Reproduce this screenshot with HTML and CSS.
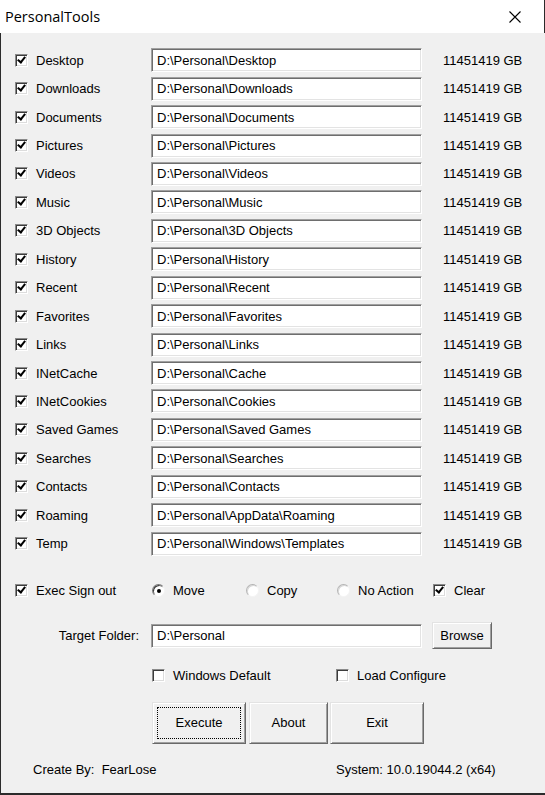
FILE: index.html
```
<!DOCTYPE html>
<html>
<head>
<meta charset="utf-8">
<link rel="stylesheet" href="styles.css">
</head>
<body>
<div class="window">
  <div class="titlebar">
    <span class="title">PersonalTools</span>
    <svg class="close" width="12" height="12" viewBox="0 0 12 12"><path d="M0.5 0.5 L11.5 11.5 M11.5 0.5 L0.5 11.5" stroke="#000" stroke-width="1.1" fill="none"/></svg>
  </div>
  <div class="client">
    <div class="rows">
      <div class="row"><label class="opt"><span class="box checked"></span><span>Desktop</span></label><div class="field">D:\Personal\Desktop</div><span class="size">11451419 GB</span></div>
      <div class="row"><label class="opt"><span class="box checked"></span><span>Downloads</span></label><div class="field">D:\Personal\Downloads</div><span class="size">11451419 GB</span></div>
      <div class="row"><label class="opt"><span class="box checked"></span><span>Documents</span></label><div class="field">D:\Personal\Documents</div><span class="size">11451419 GB</span></div>
      <div class="row"><label class="opt"><span class="box checked"></span><span>Pictures</span></label><div class="field">D:\Personal\Pictures</div><span class="size">11451419 GB</span></div>
      <div class="row"><label class="opt"><span class="box checked"></span><span>Videos</span></label><div class="field">D:\Personal\Videos</div><span class="size">11451419 GB</span></div>
      <div class="row"><label class="opt"><span class="box checked"></span><span>Music</span></label><div class="field">D:\Personal\Music</div><span class="size">11451419 GB</span></div>
      <div class="row"><label class="opt"><span class="box checked"></span><span>3D Objects</span></label><div class="field">D:\Personal\3D Objects</div><span class="size">11451419 GB</span></div>
      <div class="row"><label class="opt"><span class="box checked"></span><span>History</span></label><div class="field">D:\Personal\History</div><span class="size">11451419 GB</span></div>
      <div class="row"><label class="opt"><span class="box checked"></span><span>Recent</span></label><div class="field">D:\Personal\Recent</div><span class="size">11451419 GB</span></div>
      <div class="row"><label class="opt"><span class="box checked"></span><span>Favorites</span></label><div class="field">D:\Personal\Favorites</div><span class="size">11451419 GB</span></div>
      <div class="row"><label class="opt"><span class="box checked"></span><span>Links</span></label><div class="field">D:\Personal\Links</div><span class="size">11451419 GB</span></div>
      <div class="row"><label class="opt"><span class="box checked"></span><span>INetCache</span></label><div class="field">D:\Personal\Cache</div><span class="size">11451419 GB</span></div>
      <div class="row"><label class="opt"><span class="box checked"></span><span>INetCookies</span></label><div class="field">D:\Personal\Cookies</div><span class="size">11451419 GB</span></div>
      <div class="row"><label class="opt"><span class="box checked"></span><span>Saved Games</span></label><div class="field">D:\Personal\Saved Games</div><span class="size">11451419 GB</span></div>
      <div class="row"><label class="opt"><span class="box checked"></span><span>Searches</span></label><div class="field">D:\Personal\Searches</div><span class="size">11451419 GB</span></div>
      <div class="row"><label class="opt"><span class="box checked"></span><span>Contacts</span></label><div class="field">D:\Personal\Contacts</div><span class="size">11451419 GB</span></div>
      <div class="row"><label class="opt"><span class="box checked"></span><span>Roaming</span></label><div class="field">D:\Personal\AppData\Roaming</div><span class="size">11451419 GB</span></div>
      <div class="row"><label class="opt"><span class="box checked"></span><span>Temp</span></label><div class="field">D:\Personal\Windows\Templates</div><span class="size">11451419 GB</span></div>
    </div>

    <div class="options">
      <label class="opt"><span class="box checked"></span><span>Exec Sign out</span></label>
      <label class="opt"><span class="radio selected"></span><span>Move</span></label>
      <label class="opt"><span class="radio"></span><span>Copy</span></label>
      <label class="opt"><span class="radio"></span><span>No Action</span></label>
      <label class="opt"><span class="box checked"></span><span>Clear</span></label>
    </div>

    <div class="target">
      <span class="target-label">Target Folder:</span>
      <div class="field">D:\Personal</div>
      <div class="btn browse">Browse</div>
    </div>

    <div class="extra">
      <label class="opt"><span class="box"></span><span>Windows Default</span></label>
      <label class="opt"><span class="box"></span><span>Load Configure</span></label>
    </div>

    <div class="actions">
      <div class="btn big execute"><span class="focus">Execute</span></div>
      <div class="btn big about">About</div>
      <div class="btn big exit">Exit</div>
    </div>

    <div class="footer">
      <span>Create By:&nbsp; FearLose</span>
      <span>System: 10.0.19044.2 (x64)</span>
    </div>
  </div>
</div>
</body>
</html>
```
FILE: styles.css
```
html, body {
  margin: 0;
  padding: 0;
}
body {
  width: 545px;
  height: 795px;
  overflow: hidden;
  background: #f0f0f0;
  font-family: "Liberation Sans", Arial, sans-serif;
  font-size: 13px;
  color: #000;
}
.window {
  width: 545px;
  height: 795px;
  display: flex;
  flex-direction: column;
}
.titlebar {
  box-sizing: border-box;
  height: 33px;
  background: #fff;
  border-right: 1px solid #2b2b2b;
  display: flex;
  align-items: center;
  justify-content: space-between;
  padding: 0 23px 0 5px;
}
.title {
  font-family: "Open Sans", "Noto Sans", sans-serif;
  font-size: 14.5px;
  color: #000;
}
.close {
  display: block;
}
.client {
  flex: 1;
  box-sizing: border-box;
  border-left: 1px solid #2b2b2b;
  border-bottom: 2px solid #2b2b2b;
  display: flex;
  flex-direction: column;
}
.rows {
  padding-top: 13px;
  display: flex;
  flex-direction: column;
}
.row {
  height: 28.45px;
  display: grid;
  grid-template-columns: 136px 271px auto;
  column-gap: 0;
  align-items: center;
  padding-left: 14px;
}
.row .size {
  padding-left: 21px;
}
.opt {
  display: flex;
  align-items: center;
  gap: 8px;
  white-space: nowrap;
}
.box {
  position: relative;
  box-sizing: border-box;
  width: 13px;
  height: 13px;
  flex: none;
  background: #fff;
  border: 1px solid;
  border-color: #8a8a8a #ffffff #ffffff #8a8a8a;
  box-shadow: inset 1px 1px #3c3c3c, inset -1px -1px #dcdcdc;
}
.box.checked::after {
  content: "";
  position: absolute;
  left: 3px;
  top: 0px;
  width: 3px;
  height: 6px;
  border: solid #000;
  border-width: 0 2px 2px 0;
  transform: rotate(38deg);
}
.radio {
  position: relative;
  box-sizing: border-box;
  width: 13px;
  height: 13px;
  flex: none;
  border-radius: 50%;
  background: #fff;
  border: 1px solid;
  border-color: #b4b4b4 #f4f4f4 #f4f4f4 #b4b4b4;
  box-shadow: inset 1px 1px #d8d8d8;
}
.radio.selected {
  border-color: #7a7a7a #f4f4f4 #f4f4f4 #7a7a7a;
  box-shadow: inset 1px 1px #3c3c3c;
}
.radio.selected::after {
  content: "";
  position: absolute;
  left: 3.5px;
  top: 3.5px;
  width: 4px;
  height: 4px;
  border-radius: 50%;
  background: #000;
}
.field {
  box-sizing: border-box;
  width: 271px;
  height: 24px;
  background: #fff;
  border: 1px solid;
  border-color: #a0a0a0 #ffffff #ffffff #a0a0a0;
  box-shadow: inset 1px 1px #6e6e6e, inset -1px -1px #e3e3e3;
  padding: 0 5px;
  display: flex;
  align-items: center;
  white-space: nowrap;
  overflow: hidden;
}
.options {
  margin-top: 21px;
  height: 24px;
  display: grid;
  grid-template-columns: 137px 94px 91px 96px auto;
  align-items: center;
  padding-left: 14px;
}
.target {
  margin-top: 19px;
  height: 28px;
  display: grid;
  grid-template-columns: 150px 271px auto;
  align-items: center;
}
.target-label {
  text-align: right;
  padding-right: 12px;
}
.btn {
  box-sizing: border-box;
  background: #f0f0f0;
  border: 1px solid;
  border-color: #e3e3e3 #696969 #696969 #e3e3e3;
  box-shadow: inset 1px 1px #fff, inset -1px -1px #a0a0a0;
  display: flex;
  align-items: center;
  justify-content: center;
}
.browse {
  margin-left: 10px;
  width: 60px;
  height: 27px;
}
.extra {
  margin-top: 16px;
  height: 20px;
  display: grid;
  grid-template-columns: 184px auto;
  align-items: center;
  padding-left: 151px;
}
.actions {
  margin-top: 16px;
  display: flex;
  padding-left: 151px;
}
.big {
  height: 42px;
}
.execute {
  width: 94px;
  padding: 4px;
}
.execute .focus {
  box-sizing: border-box;
  width: 100%;
  height: 100%;
  border: 1px dotted #000;
  display: flex;
  align-items: center;
  justify-content: center;
}
.about {
  width: 79px;
  margin-left: 3px;
}
.exit {
  width: 94px;
  margin-left: 2px;
}
.footer {
  margin-top: 18px;
  display: grid;
  grid-template-columns: 303px auto;
  padding-left: 32px;
  height: 16px;
  align-items: center;
}
```
